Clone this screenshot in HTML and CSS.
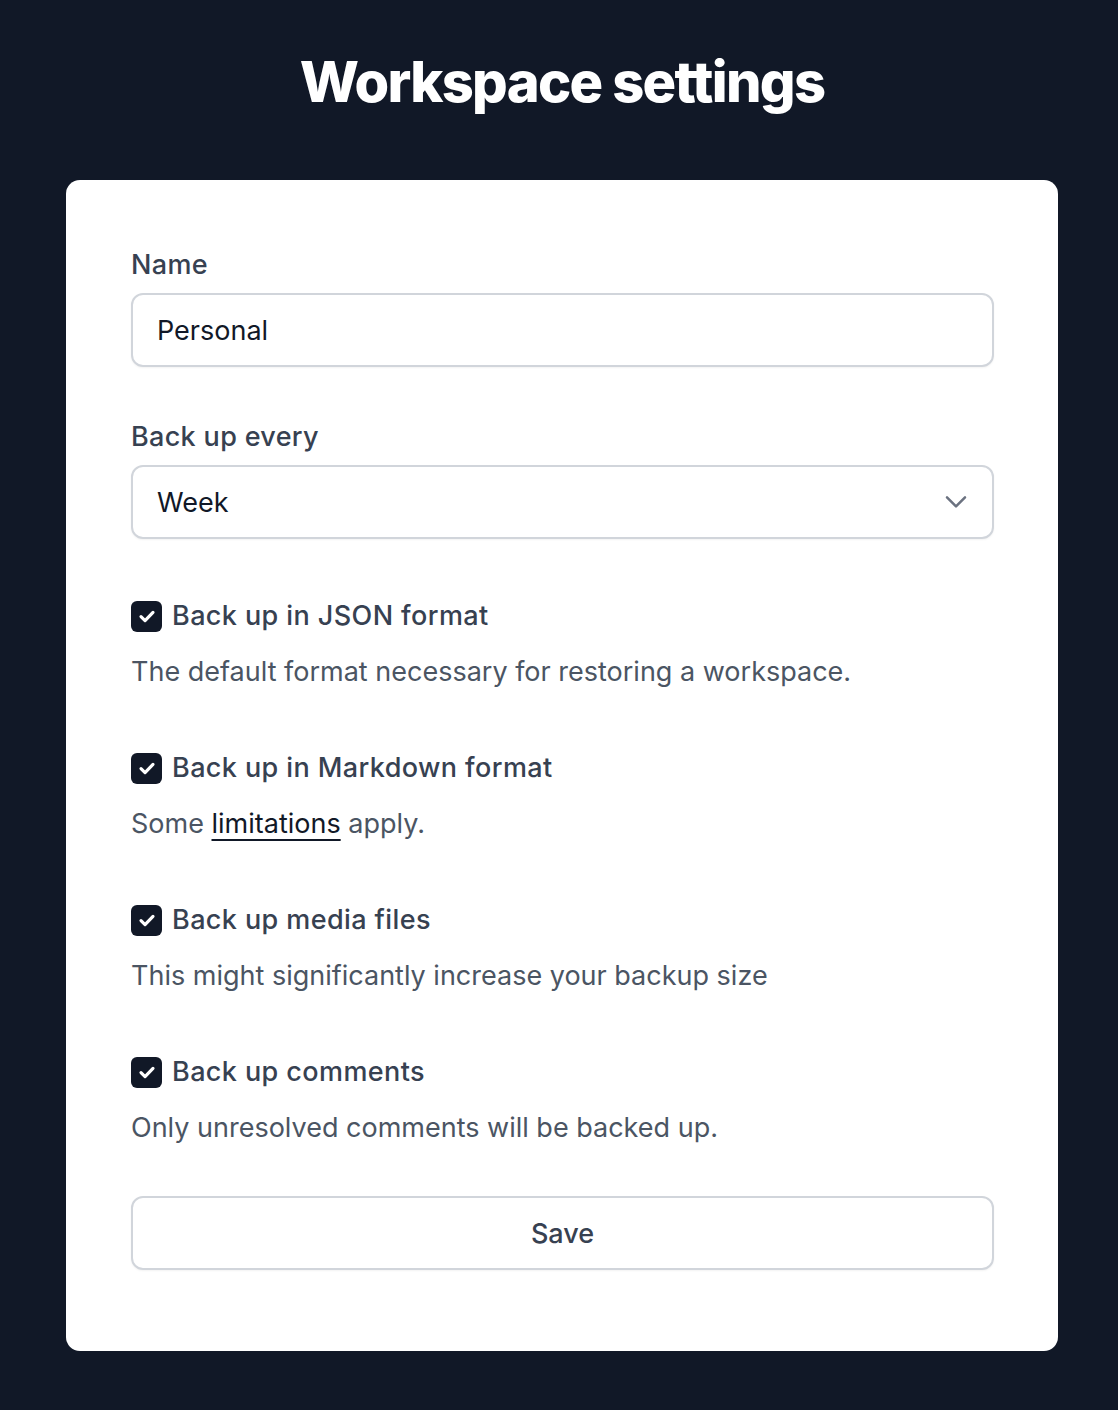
FILE: index.html
```html
<!DOCTYPE html>
<html lang="en">
<head>
    <meta charset="UTF-8">
    <meta name="viewport" content="width=device-width, initial-scale=1.0">
    <title>Workspace settings</title>
    <link rel="stylesheet" href="styles.css">
</head>
<body>
    <h1 class="page-title">Workspace settings</h1>

    <div class="card">
        <form class="settings-form">
            <div class="form-group">
                <label class="field-label" for="name">Name</label>
                <input type="text" class="form-control" id="name" name="name" value="Personal">
            </div>

            <div class="form-group">
                <label class="field-label" for="backup">Back up every</label>
                <div class="select-wrap">
                    <select class="form-control select" id="backup" name="backup">
                        <option>Day</option>
                        <option selected>Week</option>
                        <option>Month</option>
                    </select>
                    <svg class="chevron" viewBox="0 0 20 20" width="36" height="36" aria-hidden="true">
                        <path d="M5 8l5 5 5-5" fill="none" stroke="currentColor" stroke-width="1.4" stroke-linecap="round" stroke-linejoin="round"/>
                    </svg>
                </div>
            </div>

            <!-- checkbox options -->
            <div class="option">
                <label class="check-row">
                    <span class="checkbox"><svg viewBox="0 0 16 16" width="24" height="24"><path d="M4 8.4l2.7 2.7L12 5.6" fill="none" stroke="#fff" stroke-width="2.1" stroke-linecap="round" stroke-linejoin="round"/></svg></span>
                    Back up in JSON format
                </label>
                <p class="hint">The default format necessary for restoring a workspace.</p>
            </div>

            <div class="option">
                <label class="check-row">
                    <span class="checkbox"><svg viewBox="0 0 16 16" width="24" height="24"><path d="M4 8.4l2.7 2.7L12 5.6" fill="none" stroke="#fff" stroke-width="2.1" stroke-linecap="round" stroke-linejoin="round"/></svg></span>
                    Back up in Markdown format
                </label>
                <p class="hint">Some <a href="#">limitations</a> apply.</p>
            </div>

            <div class="option">
                <label class="check-row">
                    <span class="checkbox"><svg viewBox="0 0 16 16" width="24" height="24"><path d="M4 8.4l2.7 2.7L12 5.6" fill="none" stroke="#fff" stroke-width="2.1" stroke-linecap="round" stroke-linejoin="round"/></svg></span>
                    Back up media files
                </label>
                <p class="hint">This might significantly increase your backup size</p>
            </div>

            <div class="option">
                <label class="check-row">
                    <span class="checkbox"><svg viewBox="0 0 16 16" width="24" height="24"><path d="M4 8.4l2.7 2.7L12 5.6" fill="none" stroke="#fff" stroke-width="2.1" stroke-linecap="round" stroke-linejoin="round"/></svg></span>
                    Back up comments
                </label>
                <p class="hint">Only unresolved comments will be backed up.</p>
            </div>

            <button type="button" class="btn">Save</button>
        </form>
    </div>
</body>
</html>
```

FILE: styles.css
```css
* {
    box-sizing: border-box;
    margin: 0;
    padding: 0;
    font-family: Inter, 'Noto Sans', sans-serif;
}

body {
    background-color: #111827;
    padding: 48px 60px 58px 66px;
}

.page-title {
    color: #fff;
    font-size: 56px;
    font-weight: 800;
    line-height: 68px;
    letter-spacing: -0.03em;
    text-align: center;
    margin-bottom: 64px;
}

.card {
    background-color: #fff;
    border-radius: 14px;
    padding: 65px 64px 81px 65px;
}

.settings-form {
    display: flex;
    flex-direction: column;
}

.form-group {
    display: flex;
    flex-direction: column;
    gap: 8px;
    margin-bottom: 50px;
}

.field-label {
    color: #374151;
    font-size: 27px;
    font-weight: 500;
    line-height: 40px;
    letter-spacing: 0.012em;
}

.form-control {
    width: 100%;
    height: 74px;
    padding: 0 24px;
    border: 2px solid #d1d5db;
    border-radius: 12px;
    background: #fff;
    color: #111827;
    font-size: 27px;
    box-shadow: 0 1px 2px rgba(0, 0, 0, 0.05);
    outline: none;
}

.select-wrap {
    position: relative;
}

.select {
    appearance: none;
    -webkit-appearance: none;
}

.chevron {
    position: absolute;
    right: 20px;
    top: 18px;
    color: #6b7280;
    pointer-events: none;
}

.form-group:nth-child(2) {
    margin-bottom: 57px;
}

.option {
    margin-bottom: 56px;
}

.option:last-of-type {
    margin-bottom: 48px;
}

.check-row {
    display: flex;
    align-items: center;
    gap: 10px;
    color: #374151;
    font-size: 27px;
    font-weight: 500;
    line-height: 40px;
    letter-spacing: 0.015em;
}

.checkbox {
    display: flex;
    align-items: center;
    justify-content: center;
    width: 31px;
    height: 31px;
    border-radius: 6px;
    background-color: #111827;
}

.hint {
    margin-top: 16px;
    color: #4b5563;
    font-size: 27px;
    line-height: 40px;
}

.hint a {
    color: #111827;
    text-decoration: underline;
    text-decoration-thickness: 2px;
    text-underline-offset: 6px;
}

.btn {
    height: 74px;
    border: 2px solid #d1d5db;
    border-radius: 12px;
    background: #fff;
    color: #374151;
    font-size: 27px;
    font-weight: 500;
    box-shadow: 0 1px 2px rgba(0, 0, 0, 0.05);
    cursor: pointer;
}
```
